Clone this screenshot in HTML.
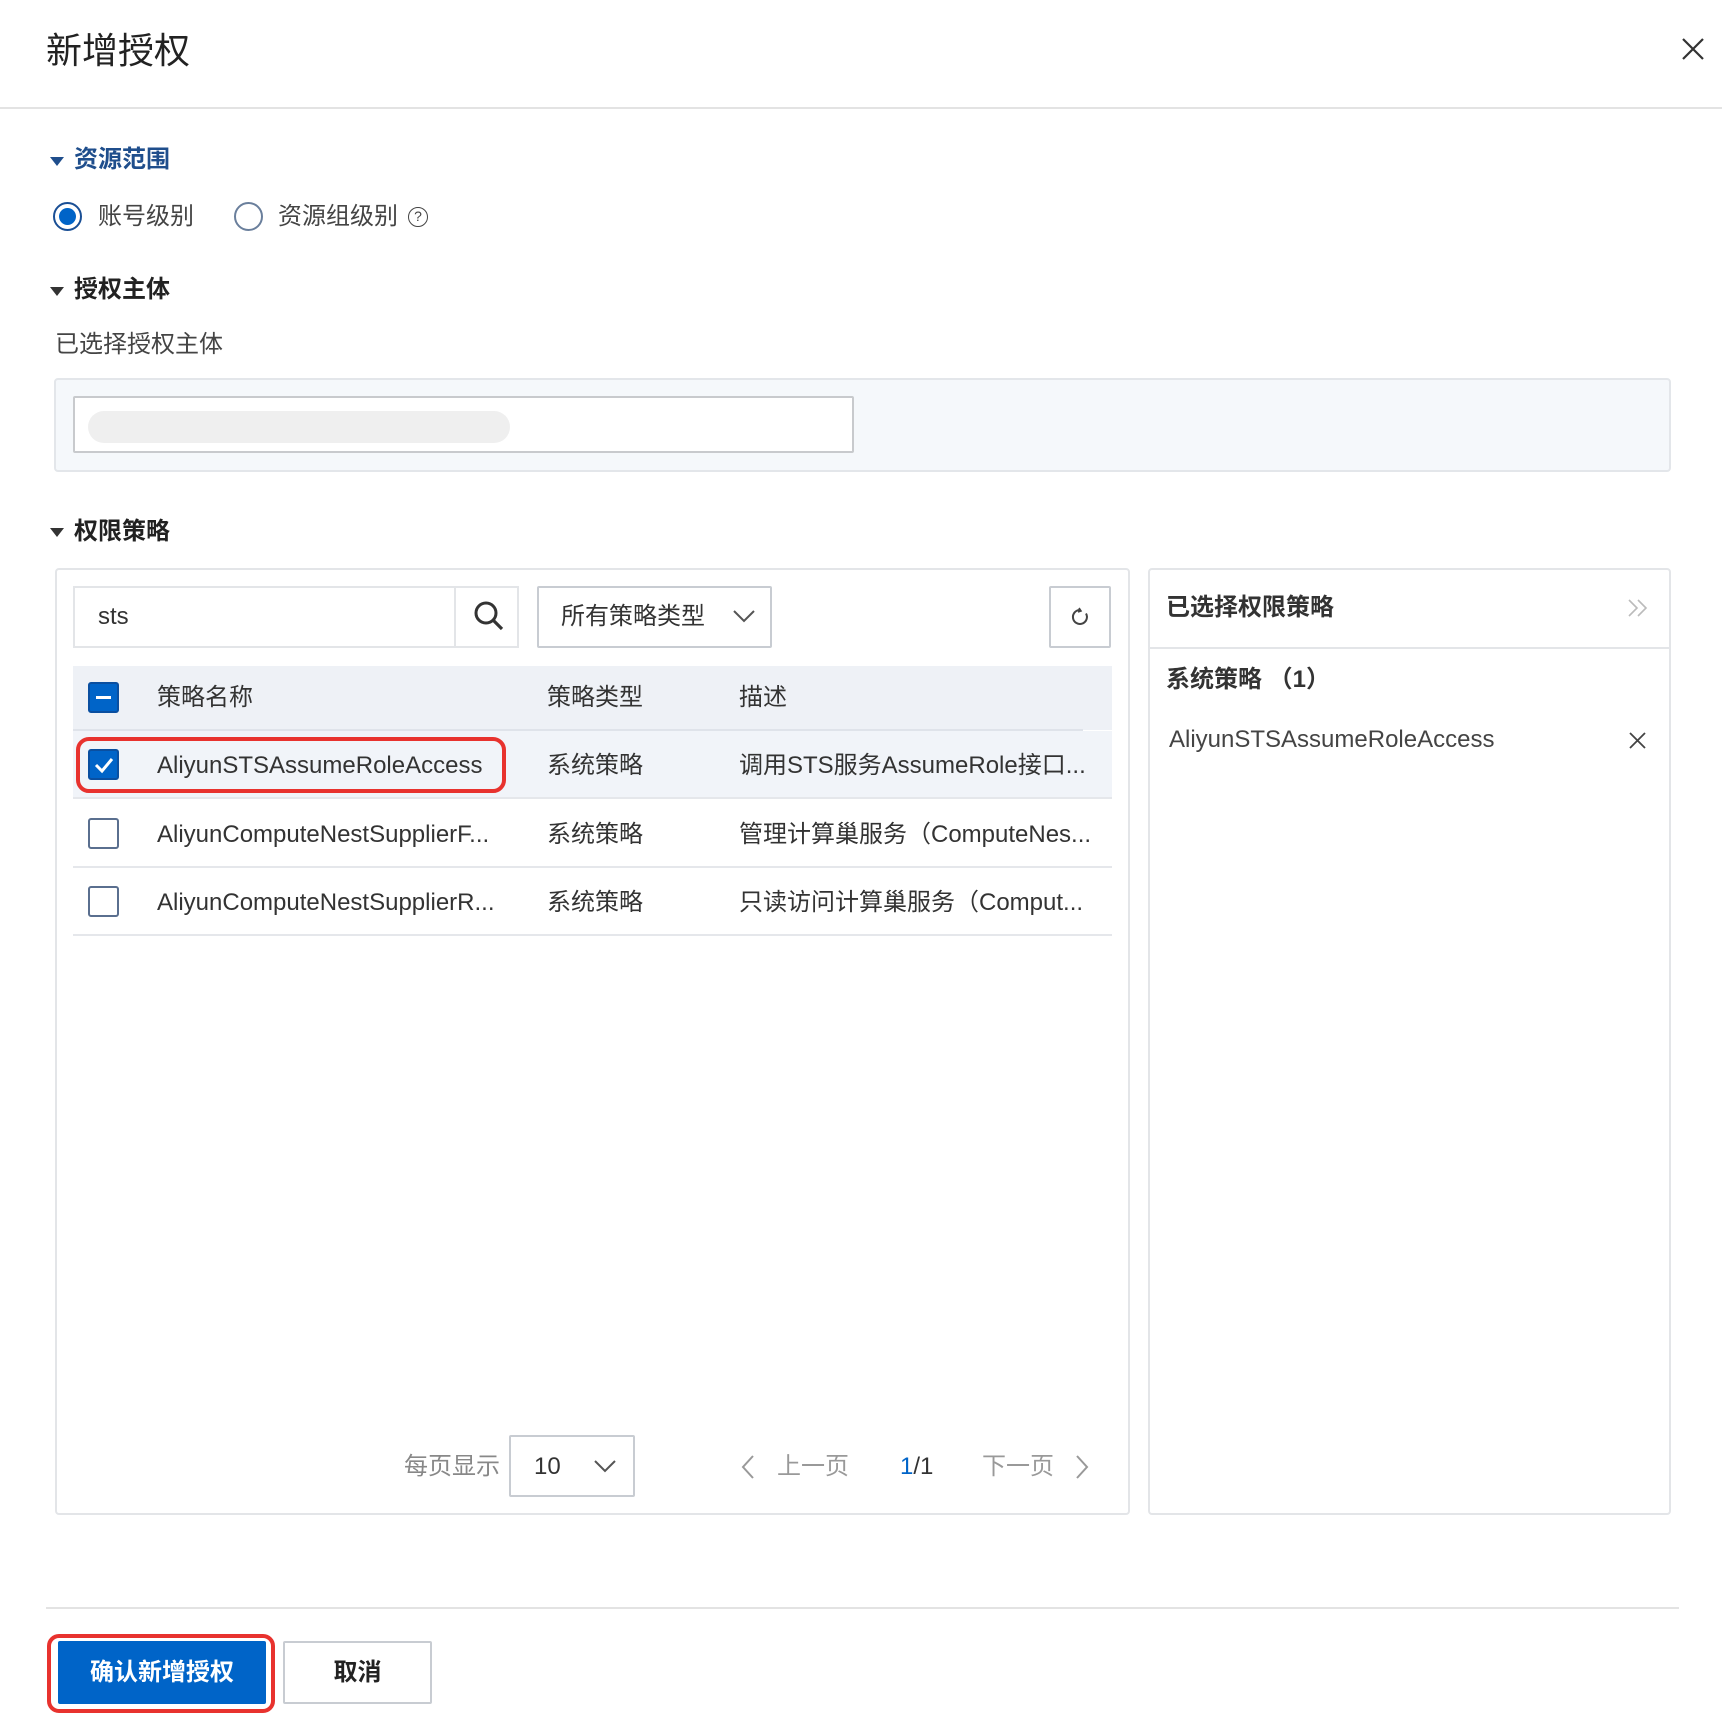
<!DOCTYPE html>
<html><head><meta charset="utf-8"><style>
*{box-sizing:border-box;margin:0;padding:0}
body{width:1722px;height:1730px;background:#fff;font-family:"Liberation Sans","Noto Sans CJK SC",sans-serif;color:#333;position:relative;overflow:hidden}
.a{position:absolute;white-space:nowrap}
.t{font-size:24px;line-height:1}
.sec{font-size:24px;font-weight:bold;color:#222;line-height:1}
.tri{position:absolute;width:0;height:0;border-left:7px solid transparent;border-right:7px solid transparent;border-top:9px solid #333}
.cb{position:absolute;width:31px;height:31px;border:2px solid #5a6f8f;border-radius:3px;background:#fff}
.cbf{background:#0064c8;border-color:#0a4fa0}
.row{position:absolute;left:73px;width:1039px;border-bottom:2px solid #e5e7eb}
</style></head><body>
<div class="a" style="left:46px;top:33px;font-size:36px;line-height:1;color:#222">新增授权</div>
<svg class="a" style="left:1682px;top:38px" width="22" height="22"><path d="M1 1L21 21M21 1L1 21" stroke="#333" stroke-width="2.2"/></svg>
<div class="a" style="left:0;top:107px;width:1722px;height:2px;background:#e3e3e3"></div>

<div class="tri" style="left:50px;top:157px;border-top-color:#1f4e8c"></div>
<div class="a sec" style="left:74px;top:148px;color:#1f4e8c">资源范围</div>
<div class="a" style="left:53px;top:202px;width:29px;height:29px;border-radius:50%;border:2px solid #1a4f95"><div style="position:absolute;left:4px;top:4px;width:17px;height:17px;border-radius:50%;background:#0064c8"></div></div>
<div class="a t" style="left:98px;top:205px;color:#444">账号级别</div>
<div class="a" style="left:234px;top:202px;width:29px;height:29px;border-radius:50%;border:2px solid #6a7f9c"></div>
<div class="a t" style="left:278px;top:205px;color:#444">资源组级别</div>
<div class="a" style="left:408px;top:207px;width:20px;height:20px;border-radius:50%;border:1.5px solid #444;font-size:14px;text-align:center;line-height:17px;color:#444">?</div>

<div class="tri" style="left:50px;top:287px"></div>
<div class="a sec" style="left:74px;top:278px">授权主体</div>
<div class="a t" style="left:55px;top:333px;color:#444">已选择授权主体</div>
<div class="a" style="left:54px;top:378px;width:1617px;height:94px;background:#f5f8fb;border:2px solid #e3e6ea;border-radius:4px"></div>
<div class="a" style="left:73px;top:396px;width:781px;height:57px;background:#fff;border:2px solid #c8cacd;border-radius:2px"></div>
<div class="a" style="left:88px;top:411px;width:422px;height:32px;background:#efefef;border-radius:16px"></div>

<div class="tri" style="left:50px;top:528px"></div>
<div class="a sec" style="left:74px;top:520px">权限策略</div>

<div class="a" style="left:55px;top:568px;width:1075px;height:947px;border:2px solid #e3e5e8;border-radius:4px"></div>
<div class="a" style="left:73px;top:586px;width:446px;height:62px;border:2px solid #e3e5e8"></div>
<div class="a" style="left:454px;top:586px;width:2px;height:62px;background:#e3e5e8"></div>
<div class="a t" style="left:98px;top:605px;color:#333">sts</div>
<svg class="a" style="left:473px;top:600px" width="32" height="32"><circle cx="13" cy="13" r="10" fill="none" stroke="#333" stroke-width="3"/><path d="M20 20L29 29" stroke="#333" stroke-width="3.2"/></svg>
<div class="a" style="left:537px;top:586px;width:235px;height:62px;border:2px solid #c8ccd2;border-radius:2px"></div>
<div class="a t" style="left:561px;top:605px;color:#333">所有策略类型</div>
<svg class="a" style="left:732px;top:608px" width="24" height="16"><path d="M2 3L12 13L22 3" fill="none" stroke="#555" stroke-width="2"/></svg>
<div class="a" style="left:1049px;top:586px;width:62px;height:62px;border:2px solid #c8ccd2;border-radius:2px"></div>
<svg class="a" style="left:1070px;top:607px" width="20" height="20"><path d="M10 3A7 7 0 1 0 16 6.5" fill="none" stroke="#444" stroke-width="2"/><path d="M9 1L11 4L8 5" fill="none" stroke="#444" stroke-width="1.6"/></svg>

<div class="a" style="left:73px;top:666px;width:1039px;height:64px;background:#eef1f6"></div>
<div class="a" style="left:73px;top:729px;width:1010px;height:2px;background:#dfe3ea"></div>
<div class="cb cbf" style="left:88px;top:682px"><div style="position:absolute;left:6px;top:12px;width:15px;height:3px;background:#fff"></div></div>
<div class="a t" style="left:157px;top:686px;color:#333">策略名称</div>
<div class="a t" style="left:547px;top:686px;color:#333">策略类型</div>
<div class="a t" style="left:739px;top:686px;color:#333">描述</div>

<div class="row" style="top:731px;height:68px;background:#f1f4f9"></div>
<div class="row" style="top:799px;height:69px"></div>
<div class="row" style="top:868px;height:68px"></div>
<div class="cb cbf" style="left:88px;top:749px"><svg style="position:absolute;left:3px;top:4px" width="22" height="20"><path d="M3 10L9 16L19 4" fill="none" stroke="#fff" stroke-width="3"/></svg></div>
<div class="a t" style="left:157px;top:754px">AliyunSTSAssumeRoleAccess</div>
<div class="a t" style="left:547px;top:754px">系统策略</div>
<div class="a t" style="left:739px;top:754px">调用STS服务AssumeRole接口...</div>
<div class="a" style="left:76px;top:737px;width:430px;height:56px;border:4px solid #e8322e;border-radius:13px"></div>

<div class="cb" style="left:88px;top:818px"></div>
<div class="a t" style="left:157px;top:823px">AliyunComputeNestSupplierF...</div>
<div class="a t" style="left:547px;top:823px">系统策略</div>
<div class="a t" style="left:739px;top:823px">管理计算巢服务（ComputeNes...</div>
<div class="cb" style="left:88px;top:886px"></div>
<div class="a t" style="left:157px;top:891px">AliyunComputeNestSupplierR...</div>
<div class="a t" style="left:547px;top:891px">系统策略</div>
<div class="a t" style="left:739px;top:891px">只读访问计算巢服务（Comput...</div>

<div class="a t" style="left:404px;top:1455px;color:#888">每页显示</div>
<div class="a" style="left:509px;top:1435px;width:126px;height:62px;border:2px solid #c8ccd2;border-radius:2px"></div>
<div class="a t" style="left:534px;top:1455px;color:#333">10</div>
<svg class="a" style="left:593px;top:1458px" width="24" height="16"><path d="M2 3L12 13L22 3" fill="none" stroke="#555" stroke-width="2"/></svg>
<svg class="a" style="left:740px;top:1454px" width="16" height="26"><path d="M13 2L3 13L13 24" fill="none" stroke="#999" stroke-width="2"/></svg>
<div class="a t" style="left:777px;top:1455px;color:#999">上一页</div>
<div class="a t" style="left:900px;top:1455px;color:#333"><span style="color:#0064c8">1</span>/1</div>
<div class="a t" style="left:982px;top:1455px;color:#999">下一页</div>
<svg class="a" style="left:1074px;top:1454px" width="16" height="26"><path d="M3 2L13 13L3 24" fill="none" stroke="#999" stroke-width="2"/></svg>

<div class="a" style="left:1148px;top:568px;width:523px;height:947px;border:2px solid #e3e5e8;border-radius:4px"></div>
<div class="a" style="left:1150px;top:647px;width:519px;height:2px;background:#e3e5e8"></div>
<div class="a t" style="left:1166px;top:596px;font-weight:bold;color:#333">已选择权限策略</div>
<svg class="a" style="left:1627px;top:598px" width="22" height="20"><path d="M2 2L10 10L2 18M11 2L19 10L11 18" fill="none" stroke="#bbb" stroke-width="1.6"/></svg>
<div class="a t" style="left:1166px;top:668px;font-weight:bold;color:#333">系统策略 （1）</div>
<div class="a t" style="left:1169px;top:728px;color:#444">AliyunSTSAssumeRoleAccess</div>
<svg class="a" style="left:1629px;top:732px" width="17" height="17"><path d="M1 1L16 16M16 1L1 16" stroke="#444" stroke-width="1.8"/></svg>

<div class="a" style="left:46px;top:1607px;width:1633px;height:2px;background:#e3e3e3"></div>
<div class="a" style="left:47px;top:1634px;width:228px;height:79px;border:4px solid #e8322e;border-radius:12px"></div>
<div class="a" style="left:58px;top:1641px;width:208px;height:63px;background:#0064c8;border-radius:2px;color:#fff;font-size:24px;font-weight:bold;text-align:center;line-height:63px">确认新增授权</div>
<div class="a" style="left:283px;top:1641px;width:149px;height:63px;border:2px solid #c8ccd2;border-radius:2px;color:#222;font-size:24px;font-weight:bold;text-align:center;line-height:59px">取消</div>
</body></html>
